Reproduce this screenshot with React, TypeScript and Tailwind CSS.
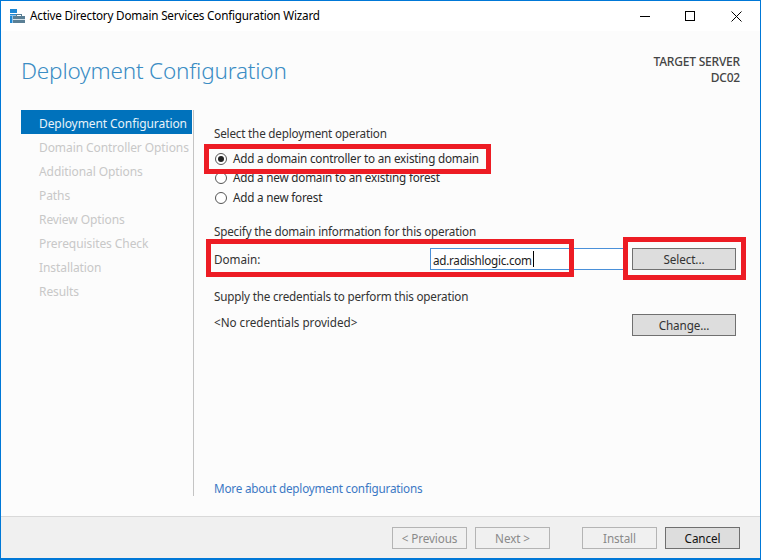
const font = { fontFamily: '"Noto Sans", sans-serif' };

const steps = [
  "Domain Controller Options",
  "Additional Options",
  "Paths",
  "Review Options",
  "Prerequisites Check",
  "Installation",
  "Results",
];

function Radio({ checked, label }: { checked?: boolean; label: string }) {
  return (
    <div className="flex h-[19.5px] items-center">
      <span className="ml-px flex h-[12px] w-[12px] items-center justify-center rounded-full border border-[#555555] bg-white">
        {checked && <span className="h-[6px] w-[6px] rounded-full bg-[#222222]" />}
      </span>
      <span className="ml-[6px] whitespace-nowrap text-[11.7px] leading-none tracking-[-0.2px] text-[#2b2b2b]">{label}</span>
    </div>
  );
}

function Btn({ label, disabled, dark }: { label: string; disabled?: boolean; dark?: boolean }) {
  const tone = disabled
    ? "border-[#b4b4b4] bg-[#f0f0f0] text-[#8a8a8a]"
    : dark
      ? "border-[#6f6f6f] bg-[#dddddd] text-[#111111]"
      : "border-[#707070] bg-[#dddddd] text-[#333333]";
  return (
    <div className={`flex h-[22px] w-[104px] items-center justify-center border pt-[2px] text-[11.7px] leading-none tracking-[-0.1px] ${tone}`}>
      {label}
    </div>
  );
}

function RedBox({ className }: { className: string }) {
  return <div className={`pointer-events-none absolute border-[5px] border-[#ed1c24] ${className}`} />;
}

export default function App() {
  return (
    <div
      className="relative flex h-[560px] w-[761px] flex-col overflow-hidden border border-b-2 border-[#0078d7] bg-[#fcfcfc]"
      style={font}
    >
      {/* title bar */}
      <div className="flex h-[30px] shrink-0 items-center bg-white">
        <svg width="15" height="16" viewBox="0 0 15 16" className="ml-[9px]">
          <rect x="0" y="1" width="7" height="4" fill="#1e88d4" />
          <rect x="0" y="6" width="7" height="1.5" fill="#1e88d4" />
          <rect x="0" y="8" width="2.5" height="7" fill="#1e88d4" />
          <rect x="3" y="8" width="12" height="7" fill="#5a7f95" />
          <rect x="6.5" y="6.5" width="5" height="2" fill="none" stroke="#5a7f95" strokeWidth="1" />
          <rect x="3" y="11" width="12" height="1" fill="#d5e2ea" />
        </svg>
        <span className="ml-[5px] text-[11.7px] leading-none tracking-[-0.19px] text-black">
          Active Directory Domain Services Configuration Wizard
        </span>
        <div className="ml-auto flex items-center">
          <svg width="10" height="10" viewBox="0 0 10 10" className="mr-[35px]">
            <path d="M0 5.5H10" stroke="#000" strokeWidth="1" />
          </svg>
          <svg width="10" height="10" viewBox="0 0 10 10" className="mr-[36px]">
            <rect x="0.5" y="0.5" width="9" height="9" fill="none" stroke="#000" strokeWidth="1" />
          </svg>
          <svg width="11" height="11" viewBox="0 0 11 11" className="mr-[18px]">
            <path d="M0.5 0.5L10.5 10.5M10.5 0.5L0.5 10.5" stroke="#000" strokeWidth="1" />
          </svg>
        </div>
      </div>

      {/* header */}
      <div className="flex h-[79px] shrink-0 justify-between pl-[20px] pr-[20px]">
        <h1 className="mt-[24px] text-[22.5px] font-light leading-[32px] tracking-[-0.17px] text-[#3b8dc4]">
          Deployment Configuration
        </h1>
        <div className="mt-[23px] text-right text-[12px] font-medium leading-[16px] tracking-[-0.2px] text-[#444444]">
          <div>TARGET SERVER</div>
          <div>DC02</div>
        </div>
      </div>

      {/* body */}
      <div className="flex h-[386px] shrink-0 pl-[20px]">
        <nav className="w-[171px] shrink-0 overflow-hidden">
          <div className="flex h-[24px] items-center whitespace-nowrap bg-[#0072bc] pl-[18px] pt-[4px] text-[12px] leading-none tracking-[-0.08px] text-[#e8f2f9]">
            Deployment Configuration
          </div>
          {steps.map((s) => (
            <div
              key={s}
              className="flex h-[24px] items-center whitespace-nowrap pl-[18px] pt-[4px] text-[12px] leading-none tracking-[-0.08px] text-[#c8c8c8]"
            >
              {s}
            </div>
          ))}
        </nav>
        <div className="ml-px w-px shrink-0 bg-[#c4c4c4]" />
        <main className="flex min-w-0 flex-1 flex-col pl-[20px] pr-[24px] pt-[15px]">
          <div className="text-[11.7px] leading-[17px] tracking-[-0.2px] text-[#333333]">Select the deployment operation</div>
          <div className="mt-[7px] flex flex-col">
            <Radio checked label="Add a domain controller to an existing domain" />
            <Radio label="Add a new domain to an existing forest" />
            <Radio label="Add a new forest" />
          </div>
          <div className="mt-[15.5px] text-[11.7px] leading-[17px] tracking-[-0.2px] text-[#333333]">
            Specify the domain information for this operation
          </div>
          <div className="mt-[8px] flex h-[22px] items-center">
            <span className="w-[46px] shrink-0 pt-[2px] text-[11.7px] leading-none text-[#333333]">Domain:</span>
            <div className="ml-[170px] flex h-[22px] w-[196px] items-center border border-[#4a90d9] bg-white pl-[2px] text-[11.7px] leading-none tracking-[-0.28px] text-[#222222]">
              <span className="pt-[3px]">ad.radishlogic.com</span>
              <span className="ml-px h-[16px] w-px bg-black" />
            </div>
            <div className="ml-auto">
              <Btn label="Select..." />
            </div>
          </div>
          <div className="mt-[18px] text-[11.7px] leading-[17px] tracking-[-0.2px] text-[#333333]">
            Supply the credentials to perform this operation
          </div>
          <div className="mt-[9px] flex h-[22px] items-center justify-between">
            <span className="mb-[5px] text-[11.7px] leading-none tracking-[-0.03px] text-[#333333]">&lt;No credentials provided&gt;</span>
            <Btn label="Change..." />
          </div>
          <a className="mt-auto mb-[-1px] text-[11.7px] leading-[17px] tracking-[-0.2px] text-[#3b78c4]">
            More about deployment configurations
          </a>
        </main>
      </div>

      {/* footer */}
      <div className="mt-auto flex h-[42px] shrink-0 items-start border-t border-[#d9d9d9] bg-[#f0f0f0] pl-[391px] pt-[10px]">
        <div className="flex w-[158px] gap-[8px] [&>div]:w-[75px]">
          <Btn label="< Previous" disabled />
          <Btn label="Next >" disabled />
        </div>
        <div className="ml-[32px] flex gap-[8px] [&>div]:w-[75px]">
          <Btn label="Install" disabled />
          <Btn label="Cancel" dark />
        </div>
      </div>

      {/* annotation boxes */}
      <RedBox className="left-[203px] top-[143px] h-[30px] w-[287px]" />
      <RedBox className="left-[205px] top-[238px] h-[38px] w-[368px]" />
      <RedBox className="left-[622px] top-[236px] h-[43px] w-[123px]" />
    </div>
  );
}
